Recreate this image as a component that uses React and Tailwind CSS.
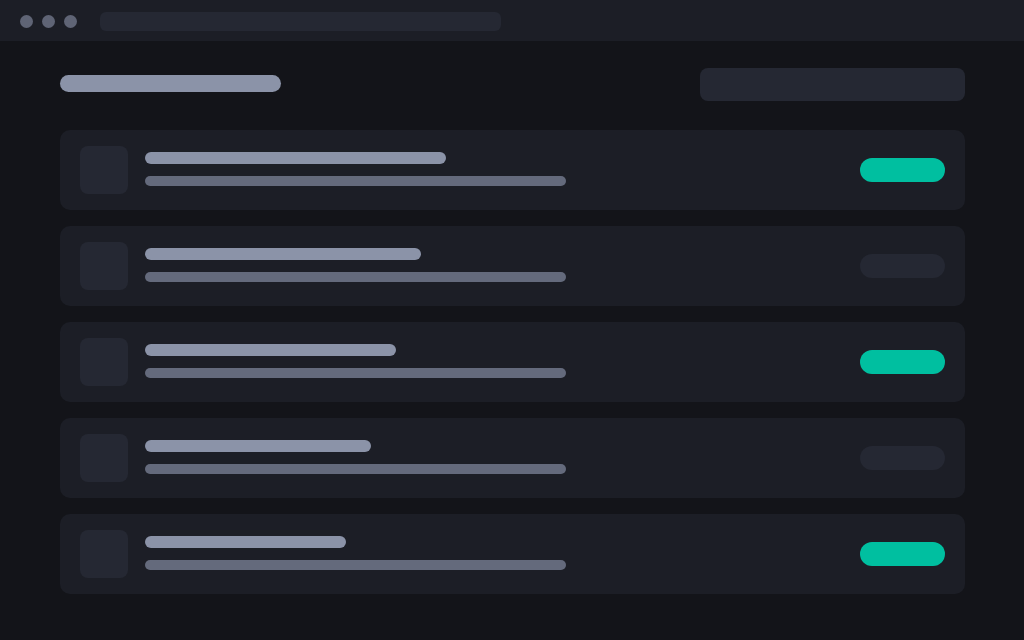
export default function App() {
  const rows = [
    { w: 301, on: true },
    { w: 276, on: false },
    { w: 251, on: true },
    { w: 226, on: false },
    { w: 201, on: true },
  ];
  return (
    <div className="w-[1024px] h-[640px] bg-[#131419] overflow-hidden" style={{ fontFamily: "Inter, sans-serif" }}>
      <div className="h-[41px] bg-[#1c1e26] flex items-start pl-5 pt-3">
        <div className="mt-[3px] flex gap-[9px]">
          <div className="w-[13px] h-[13px] rounded-full bg-[#5f6475]" />
          <div className="w-[13px] h-[13px] rounded-full bg-[#5f6475]" />
          <div className="w-[13px] h-[13px] rounded-full bg-[#5f6475]" />
        </div>
        <div className="ml-[23px] w-[401px] h-[19px] rounded-md bg-[#252833]" />
      </div>
      <div className="pl-[60px] pr-[59px] pt-[27px]">
        <div className="flex items-start justify-between h-[33px] mb-[29px]">
          <div className="mt-[7px] w-[221px] h-[17px] rounded-full bg-[#8b93a8]" />
          <div className="w-[265px] h-[33px] rounded-lg bg-[#252833]" />
        </div>
        <div className="flex flex-col gap-4">
          {rows.map((r, i) => (
            <div key={i} className="h-20 rounded-[10px] bg-[#1c1e26] flex items-center pl-5 pr-5">
              <div className="w-12 h-12 rounded-lg bg-[#252833]" />
              <div className="ml-[17px] pb-[2px] flex flex-col gap-3">
                <div className="h-3 rounded-full bg-[#8b93a8]" style={{ width: r.w }} />
                <div className="w-[421px] h-[10px] rounded-full bg-[#646a7c]" />
              </div>
              <div className={"ml-auto w-[85px] h-6 rounded-full " + (r.on ? "bg-[#00bfa0]" : "bg-[#252833]")} />
            </div>
          ))}
        </div>
      </div>
    </div>
  );
}
